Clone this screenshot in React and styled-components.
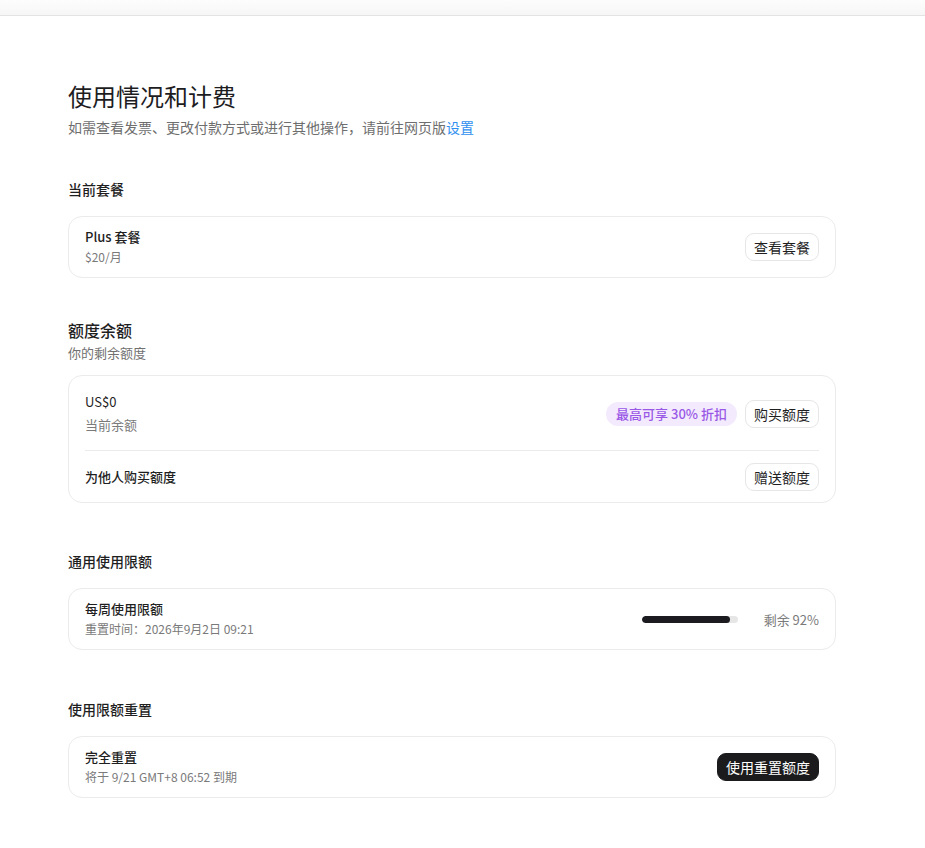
import styled, { createGlobalStyle } from "styled-components";

const GlobalStyle = createGlobalStyle`
  html, body {
    margin: 0;
    padding: 0;
    background: #ffffff;
  }
  body {
    font-family: "Noto Sans CJK SC", "Noto Sans", sans-serif;
    color: #1f1f1f;
    -webkit-font-smoothing: antialiased;
  }
`;

const usage = { remaining: 92 };

const App = () => {
  return (
    <>
      <GlobalStyle />
      <TopBar />
      <Page>
        <Title>使用情况和计费</Title>
        <Subtitle>
          如需查看发票、更改付款方式或进行其他操作，请前往网页版<Link>设置</Link>
        </Subtitle>

        <Section $top={42}>
          <SectionHeading>当前套餐</SectionHeading>
          <Card>
            <Row>
              <Info>
                <Label>Plus 套餐</Label>
                <Meta>$20/月</Meta>
              </Info>
              <Button>查看套餐</Button>
            </Row>
          </Card>
        </Section>

        <Section $top={41}>
          <SectionHeading $large>额度余额</SectionHeading>
          <SectionNote>你的剩余额度</SectionNote>
          <Card>
            <Row $pad="16px 0 15px">
              <Info $gap={3}>
                <Amount>US$0</Amount>
                <Meta $size={13}>当前余额</Meta>
              </Info>
              <Actions>
                <Badge>最高可享 30% 折扣</Badge>
                <Button>购买额度</Button>
              </Actions>
            </Row>
            <Divider />
            <Row $pad="12px 0 11px">
              <Label>为他人购买额度</Label>
              <Button>赠送额度</Button>
            </Row>
          </Card>
        </Section>

        <Section $top={48}>
          <SectionHeading>通用使用限额</SectionHeading>
          <Card>
            <Row>
              <Info>
                <Label>每周使用限额</Label>
                <Meta>重置时间：2026年9月2日 09:21</Meta>
              </Info>
              <Actions $gap={26}>
                <Track>
                  <Fill style={{ width: `${usage.remaining}%` }} />
                </Track>
                <Remaining>剩余 {usage.remaining}%</Remaining>
              </Actions>
            </Row>
          </Card>
        </Section>

        <Section $top={49}>
          <SectionHeading>使用限额重置</SectionHeading>
          <Card>
            <Row>
              <Info>
                <Label>完全重置</Label>
                <Meta>将于 9/21 GMT+8 06:52 到期</Meta>
              </Info>
              <Button $dark>使用重置额度</Button>
            </Row>
          </Card>
        </Section>
      </Page>
    </>
  );
};

export default App;

const TopBar = styled.div`
  height: 15px;
  background: linear-gradient(#fdfdfd, #f6f6f6);
  border-bottom: 1px solid #e3e3e3;
`;

const Page = styled.main`
  width: 768px;
  margin-left: 68px;
  padding: 64px 0 50px;
  display: flex;
  flex-direction: column;
`;

const Title = styled.h1`
  margin: 0;
  font-size: 24px;
  line-height: 32px;
  font-weight: 400;
  color: #1d1d1f;
`;

const Subtitle = styled.p`
  margin: 5px 0 0;
  font-size: 14px;
  line-height: 20px;
  color: #6e6e6e;
`;

const Link = styled.a`
  color: #2f8ff0;
  cursor: pointer;
`;

const Section = styled.section`
  margin-top: ${(p) => p.$top}px;
  display: flex;
  flex-direction: column;
`;

const SectionHeading = styled.h2`
  margin: 0 0 ${(p) => (p.$large ? 3 : 17)}px;
  font-size: ${(p) => (p.$large ? 16 : 14)}px;
  line-height: ${(p) => (p.$large ? 22 : 20)}px;
  font-weight: 500;
  color: #1f1f1f;
`;

const SectionNote = styled.p`
  margin: 0 0 13px;
  font-size: 13px;
  line-height: 18px;
  color: #707070;
`;

const Card = styled.div`
  border: 1px solid #ebebeb;
  border-radius: 14px;
  padding: 0 16px;
  background: #fff;
`;

const Row = styled.div`
  display: flex;
  align-items: center;
  justify-content: space-between;
  padding: ${(p) => p.$pad ?? "11px 0"};
`;

const Info = styled.div`
  display: flex;
  flex-direction: column;
  gap: ${(p) => p.$gap ?? 2}px;
`;

const Label = styled.div`
  font-size: 13px;
  line-height: 18px;
  font-weight: 500;
  color: #1f1f1f;
`;

const Amount = styled.div`
  font-size: 13px;
  line-height: 20px;
  color: #1f1f1f;
`;

const Meta = styled.div`
  font-size: ${(p) => p.$size ?? 12}px;
  line-height: ${(p) => (p.$size ? 20 : 18)}px;
  color: #7a7a7a;
`;

const Actions = styled.div`
  display: flex;
  align-items: center;
  gap: ${(p) => p.$gap ?? 8}px;
`;

const Button = styled.button`
  font-family: inherit;
  font-size: 14px;
  line-height: 18px;
  height: 28px;
  padding: 0 8px;
  border-radius: 9px;
  cursor: pointer;
  border: 1px solid ${(p) => (p.$dark ? "#1b1b1e" : "#e6e6e6")};
  background: ${(p) => (p.$dark ? "#1b1b1e" : "#ffffff")};
  color: ${(p) => (p.$dark ? "#ffffff" : "#1f1f1f")};
`;

const Badge = styled.span`
  height: 24px;
  display: inline-flex;
  align-items: center;
  padding: 0 10px;
  border-radius: 12px;
  background: #f3ebfd;
  color: #9a58e6;
  font-size: 13px;
  font-weight: 500;
`;

const Divider = styled.hr`
  margin: 0;
  border: none;
  border-top: 1px solid #ebebeb;
`;

const Track = styled.div`
  width: 96px;
  height: 7px;
  border-radius: 4px;
  background: #e6e6e6;
  overflow: hidden;
`;

const Fill = styled.div`
  height: 100%;
  border-radius: 4px;
  background: #1b1b20;
`;

const Remaining = styled.span`
  font-size: 13px;
  color: #7a7a7a;
`;
